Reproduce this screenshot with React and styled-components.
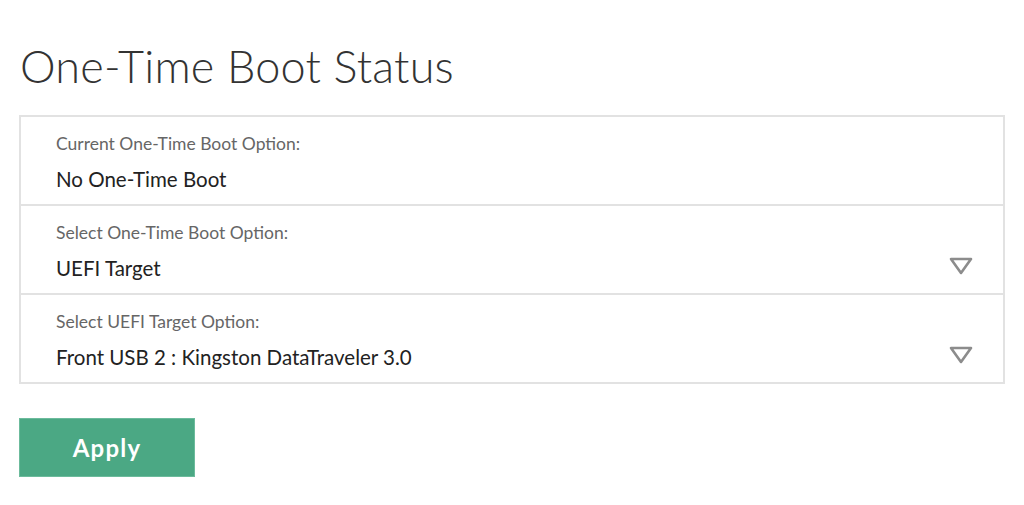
import React from 'react';
import styled, { createGlobalStyle } from 'styled-components';

const GlobalStyle = createGlobalStyle`
  body {
    margin: 0;
    background: #fff;
    font-family: 'Lato', 'Open Sans', sans-serif;
  }
`;

const rows = [
  { label: "Current One-Time Boot Option:", value: "No One-Time Boot", select: false },
  { label: "Select One-Time Boot Option:", value: "UEFI Target", select: true },
  { label: "Select UEFI Target Option:", value: "Front USB 2 : Kingston DataTraveler 3.0", select: true },
];

const Caret = () => (
  <svg width="26" height="20" viewBox="0 0 26 20">
    <path d="M3 3 L23 3 L13 17 Z" fill="none" stroke="#8c8c8c" strokeWidth="2.6" strokeLinejoin="round" />
  </svg>
);

const App = () => {
  return (
    <Page>
      <GlobalStyle />
      <Title>One-Time Boot Status</Title>
      <Panel>
        {rows.map((row, index) => (
          <Row key={index}>
            <Field>
              <Label>{row.label}</Label>
              <Value>{row.value}</Value>
            </Field>
            {row.select && <CaretWrap><Caret /></CaretWrap>}
          </Row>
        ))}
      </Panel>
      <ApplyButton>Apply</ApplyButton>
    </Page>
  );
}

export default App;

const Page = styled.div`
  padding: 38px 19px 0 19px;
  width: 986px;
`;

const Title = styled.h1`
  margin: 0 0 0 1px;
  font-weight: 300;
  font-size: 45px;
  line-height: 56px;
  color: #333;
  letter-spacing: 0.2px;
`;

const Panel = styled.div`
  margin-top: 21px;
  border: 2px solid #e2e2e2;
  display: flex;
  flex-direction: column;
`;

const Row = styled.div`
  height: 87px;
  display: flex;
  align-items: center;
  padding: 0 28px 0 35px;
  & + & {
    border-top: 2px solid #e2e2e2;
  }
`;

const Field = styled.div`
  flex: 1;
  display: flex;
  flex-direction: column;
  padding-top: 4px;
`;

const Label = styled.div`
  font-size: 17.5px;
  line-height: 20px;
  color: #666;
`;

const Value = styled.div`
  font-size: 20.5px;
  line-height: 24px;
  color: #222;
  margin-top: 13px;
`;

const CaretWrap = styled.div`
  margin-top: 32px;
  margin-right: 1px;
  display: flex;
`;

const ApplyButton = styled.button`
  margin-top: 34px;
  width: 176px;
  height: 59px;
  background: #4ba884;
  border: 1px solid #6cbb9c;
  color: #fff;
  font-family: 'Lato', sans-serif;
  font-weight: 700;
  font-size: 24px;
  letter-spacing: 1.2px;
  cursor: pointer;
`;
